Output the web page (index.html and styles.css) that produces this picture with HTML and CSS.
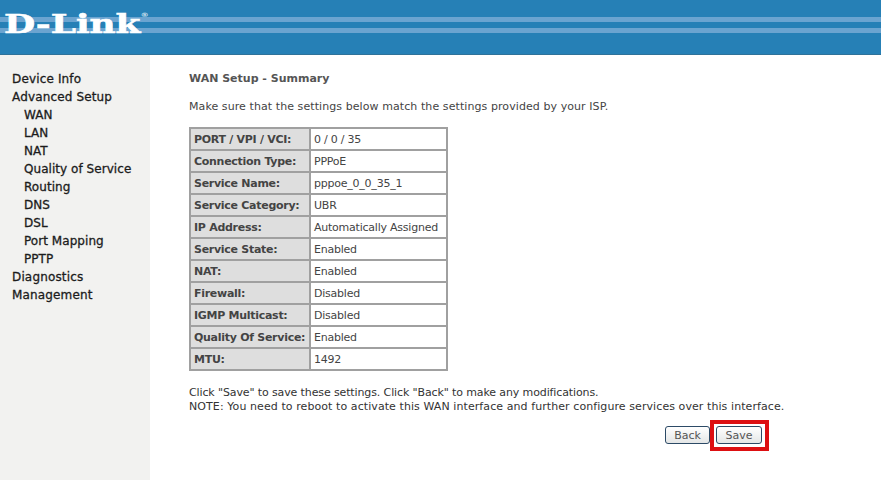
FILE: index.html
```html
<!DOCTYPE html>
<html lang="en">
<head>
<meta charset="utf-8">
<title>WAN Setup - Summary</title>
<link rel="stylesheet" href="styles.css">
</head>
<body>
<header class="banner"><span class="logo">D-Link<sup class="reg">®</sup></span></header>
<div class="main">
  <nav class="side">
    <a class="l1">Device Info</a>
    <a class="l1">Advanced Setup</a>
    <a class="l2">WAN</a>
    <a class="l2">LAN</a>
    <a class="l2">NAT</a>
    <a class="l2">Quality of Service</a>
    <a class="l2">Routing</a>
    <a class="l2">DNS</a>
    <a class="l2">DSL</a>
    <a class="l2">Port Mapping</a>
    <a class="l2">PPTP</a>
    <a class="l1">Diagnostics</a>
    <a class="l1">Management</a>
  </nav>
  <main class="content">
    <h1 class="title">WAN Setup - Summary</h1>
    <p class="intro">Make sure that the settings below match the settings provided by your ISP.</p>
    <table class="summary">
      <tr><th>PORT / VPI / VCI:</th><td>0 / 0 / 35</td></tr>
      <tr><th>Connection Type:</th><td>PPPoE</td></tr>
      <tr><th>Service Name:</th><td>pppoe_0_0_35_1</td></tr>
      <tr><th>Service Category:</th><td>UBR</td></tr>
      <tr><th>IP Address:</th><td>Automatically Assigned</td></tr>
      <tr><th>Service State:</th><td>Enabled</td></tr>
      <tr><th>NAT:</th><td>Enabled</td></tr>
      <tr><th>Firewall:</th><td>Disabled</td></tr>
      <tr><th>IGMP Multicast:</th><td>Disabled</td></tr>
      <tr><th>Quality Of Service:</th><td>Enabled</td></tr>
      <tr><th>MTU:</th><td>1492</td></tr>
    </table>
    <p class="note"><span class="note-first">Click "Save" to save these settings. Click "Back" to make any modifications.</span><br>NOTE: You need to reboot to activate this WAN interface and further configure services over this interface.</p>
    <div class="actions">
      <button class="btn btn-back" type="button">Back</button>
      <span class="highlight"><button class="btn" type="button">Save</button></span>
    </div>
  </main>
</div>
</body>
</html>
```
FILE: styles.css
```css
html, body { margin: 0; padding: 0; height: 100%; }
body {
  background: #fff;
  font-family: "DejaVu Sans", sans-serif;
  font-size: 11px;
  color: #333;
  overflow: hidden;
}
.banner {
  height: 55px;
  box-sizing: border-box;
  padding: 10px 0 0 4px;
  border-bottom: 1px solid #2f7299;
  background: linear-gradient(to bottom,
    #2680b6 0, #2680b6 17px,
    #6ba4d0 17px, #6ba4d0 22px,
    #2680b6 22px, #2680b6 28px,
    #6ba4d0 28px, #6ba4d0 33px,
    #2680b6 33px);
}
.logo {
  display: block;
  width: 105px;
  font-family: "DejaVu Serif", serif;
  font-weight: bold;
  font-size: 26px;
  line-height: 28px;
  color: #fff;
  white-space: nowrap;
  -webkit-text-stroke: 0.6px #fff;
  transform: scaleX(1.38);
  transform-origin: left center;
}
.reg { font-size: 6px; vertical-align: top; line-height: 10px; font-family: "DejaVu Sans", sans-serif; color: #cfe0ee; -webkit-text-stroke: 0; }
.main { display: flex; height: 425px; }
.side {
  width: 150px;
  box-sizing: border-box;
  background: #f2f2f0;
  padding: 15px 0 0 12px;
  display: flex;
  flex-direction: column;
}
.side a { display: block; height: 18px; line-height: 18px; font-size: 12px; letter-spacing: 0.15px; color: #1c1c1c; -webkit-text-stroke: 0.3px #1c1c1c; white-space: nowrap; }
.side .l2 { padding-left: 12px; letter-spacing: 0.05px; }
.content { flex: 1; padding: 15px 0 0 39px; min-width: 0; }
.title { margin: 0; font-size: 11px; line-height: 18px; font-weight: bold; color: #555; }
.intro { margin: 10px 0 0; line-height: 18px; color: #444; letter-spacing: 0.08px; }
.summary {
  margin-top: 11px;
  border-collapse: collapse;
  border: 2px solid #808080;
  width: 259px;
}
.summary th, .summary td {
  border: 2px solid #a0a0a0;
  height: 18px;
  padding: 2px 3px 0;
  line-height: 18px;
  text-align: left;
  white-space: nowrap;
  box-sizing: content-box;
}
.summary th { width: 112px; background: #dedede; color: #444; font-weight: bold; letter-spacing: -0.28px; }
.summary td { color: #444; letter-spacing: -0.23px; }
.note { margin: 15px 0 0; line-height: 14px; color: #333; white-space: nowrap; letter-spacing: 0.08px; }
.note-first { letter-spacing: -0.12px; }
.actions { display: flex; justify-content: flex-end; align-items: center; margin: 12px 0 0; padding-right: 119px; gap: 6px; }
.btn {
  display: block;
  width: 46px;
  height: 18px;
  padding: 0;
  font: 11px "DejaVu Sans", sans-serif;
  color: #555;
  background: linear-gradient(to bottom, #fff, #e4e6e6);
  border: 1px solid #2c4a66;
  border-radius: 3px;
}
.btn-back { width: 45px; }
.highlight { display: block; padding: 2px 3px 3px 2px; border: 4px solid #dd0f12; margin: -6px -7px -7px -6px; }
```
